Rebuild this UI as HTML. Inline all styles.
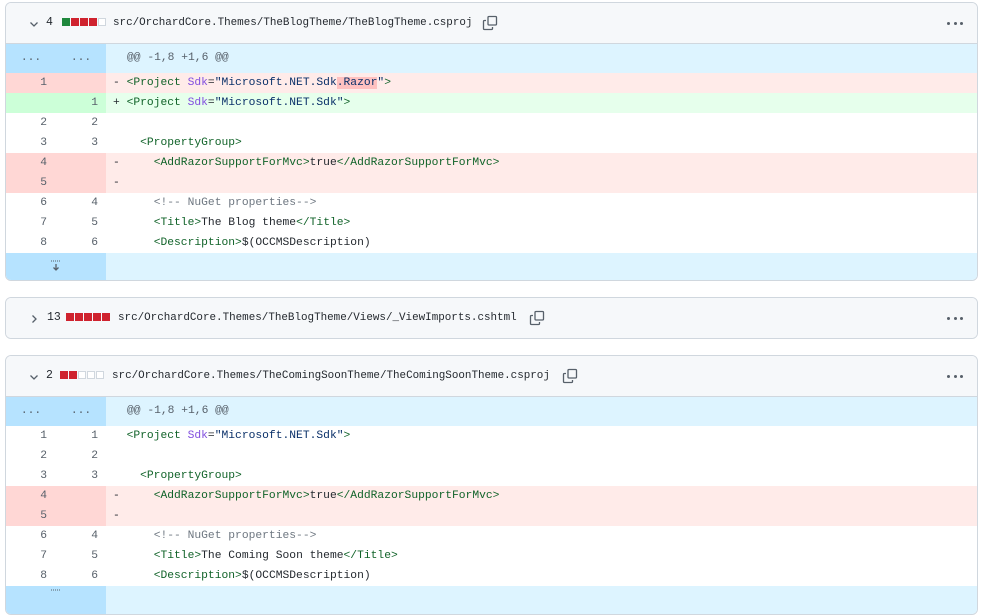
<!DOCTYPE html>
<html><head><meta charset="utf-8"><style>
*{box-sizing:border-box;margin:0;padding:0}
body{width:987px;height:597px;overflow:hidden;background:#fff;font-family:"Liberation Mono",monospace;color:#24292f}
.box{position:absolute;left:5px;width:973px;border:1px solid #d0d7de;border-radius:6px;overflow:hidden;background:#fff}
.hd{height:41px;background:#f6f8fa;border-bottom:1px solid #d0d7de;position:relative;font-size:10.9px;white-space:pre}
.hd.closed{border-bottom:none;height:40px}
.hd>*{position:absolute;top:0;line-height:40px}
.chev{color:#57606a}
.n{color:#24292f;font-size:11.5px}
.sqs{display:flex;gap:1px;top:15px!important;line-height:0!important}
.sq{display:inline-block;width:8px;height:8px}
.g{background:#1f883d}.r{background:#cf222e}.e{background:#fff;border:1px solid #d0d7de}
.dots{left:auto;right:14px;top:19px!important;width:16px;display:flex;justify-content:space-between;line-height:0!important}
.dots i{width:3px;height:3px;background:#57606a;border-radius:50%}
.row{display:flex;height:20px;line-height:20px;font-size:11.3px;white-space:pre}
.ln{width:50px;text-align:right;padding-right:9px;color:#57606a}
.ln.b{padding-right:8px}
.c{flex:1;padding-left:7px}
.hunk{height:29px;line-height:29px;background:#ddf4ff}
.hunk .ln{background:#b6e3ff;color:#57606a;text-align:center;padding:0}
.hunk .c{color:#57606a;padding-left:21px}
.del{background:#ffebe9}.del .ln{background:#ffd7d5}
.add{background:#e6ffec}.add .ln{background:#ccffd8}
.t{color:#116329}.a{color:#8250df}.s{color:#0a3069}.cm{color:#6e7781}
.hl{background:rgba(255,129,130,.4)}
.exp{height:28px;background:#ddf4ff}
.exp .ln2{width:100px;background:#b6e3ff;position:relative}
.copy{top:12px!important;line-height:0!important}
</style></head><body>

<div class="box" style="top:2px;height:279px">
<div class="hd"><svg class="chev" style="left:22px;top:15px" width="12" height="12" viewBox="0 0 12 12"><path d="M2.5 4.5L6 8l3.5-3.5" stroke="#57606a" stroke-width="1.3" fill="none"/></svg><span class="n" style="left:40px">4</span><span class="sqs" style="left:56px"><span class="sq g"></span><span class="sq r"></span><span class="sq r"></span><span class="sq r"></span><span class="sq e"></span></span><span style="left:107px">src/OrchardCore.Themes/TheBlogTheme/TheBlogTheme.csproj</span><svg class="copy" style="left:476px" width="16" height="16" viewBox="0 0 16 16" fill="none" stroke="#57606a" stroke-width="1.3"><rect x="6" y="1.5" width="8.5" height="8.5" rx="1"/><path d="M4 5.5H2.5a1 1 0 0 0-1 1v7a1 1 0 0 0 1 1h7a1 1 0 0 0 1-1V12"/></svg><div class="dots"><i></i><i></i><i></i></div></div>
<div class="row hunk"><span class="ln">...</span><span class="ln">...</span><span class="c">@@ -1,8 +1,6 @@</span></div>
<div class="row del"><span class="ln">1</span><span class="ln b"></span><span class="c">- <span class="t">&lt;Project</span> <span class="a">Sdk</span>=<span class="s">"Microsoft.NET.Sdk<span class="hl">.Razor</span>"</span><span class="t">&gt;</span></span></div>
<div class="row add"><span class="ln"></span><span class="ln b">1</span><span class="c">+ <span class="t">&lt;Project</span> <span class="a">Sdk</span>=<span class="s">"Microsoft.NET.Sdk"</span><span class="t">&gt;</span></span></div>
<div class="row"><span class="ln">2</span><span class="ln b">2</span><span class="c">  </span></div>
<div class="row"><span class="ln">3</span><span class="ln b">3</span><span class="c">    <span class="t">&lt;PropertyGroup&gt;</span></span></div>
<div class="row del"><span class="ln">4</span><span class="ln b"></span><span class="c">-     <span class="t">&lt;AddRazorSupportForMvc&gt;</span>true<span class="t">&lt;/AddRazorSupportForMvc&gt;</span></span></div>
<div class="row del"><span class="ln">5</span><span class="ln b"></span><span class="c">-</span></div>
<div class="row"><span class="ln">6</span><span class="ln b">4</span><span class="c">      <span class="cm">&lt;!-- NuGet properties--&gt;</span></span></div>
<div class="row"><span class="ln">7</span><span class="ln b">5</span><span class="c">      <span class="t">&lt;Title&gt;</span>The Blog theme<span class="t">&lt;/Title&gt;</span></span></div>
<div class="row"><span class="ln">8</span><span class="ln b">6</span><span class="c">      <span class="t">&lt;Description&gt;</span>$(OCCMSDescription)</span></div>
<div class="row exp"><span class="ln2"><svg style="position:absolute;left:44px;top:7px" width="12" height="13" viewBox="0 0 12 13"><path d="M1 1h10" stroke="#57606a" stroke-width="1" stroke-dasharray="1 1"/><path d="M6 4v6M3.5 7.5L6 10l2.5-2.5" stroke="#57606a" stroke-width="1.3" fill="none"/></svg></span></div>
</div>

<div class="box" style="top:297px;height:42px">
<div class="hd closed"><svg style="left:22px;top:15px" width="12" height="12" viewBox="0 0 12 12"><path d="M4.5 2.5L8 6l-3.5 3.5" stroke="#57606a" stroke-width="1.3" fill="none"/></svg><span class="n" style="left:41px">13</span><span class="sqs" style="left:60px"><span class="sq r"></span><span class="sq r"></span><span class="sq r"></span><span class="sq r"></span><span class="sq r"></span></span><span style="left:112px">src/OrchardCore.Themes/TheBlogTheme/Views/_ViewImports.cshtml</span><svg class="copy" style="left:523px" width="16" height="16" viewBox="0 0 16 16" fill="none" stroke="#57606a" stroke-width="1.3"><rect x="6" y="1.5" width="8.5" height="8.5" rx="1"/><path d="M4 5.5H2.5a1 1 0 0 0-1 1v7a1 1 0 0 0 1 1h7a1 1 0 0 0 1-1V12"/></svg><div class="dots"><i></i><i></i><i></i></div></div>
</div>

<div class="box" style="top:355px;height:260px">
<div class="hd"><svg style="left:22px;top:15px" width="12" height="12" viewBox="0 0 12 12"><path d="M2.5 4.5L6 8l3.5-3.5" stroke="#57606a" stroke-width="1.3" fill="none"/></svg><span class="n" style="left:40px">2</span><span class="sqs" style="left:54px"><span class="sq r"></span><span class="sq r"></span><span class="sq e"></span><span class="sq e"></span><span class="sq e"></span></span><span style="left:106px">src/OrchardCore.Themes/TheComingSoonTheme/TheComingSoonTheme.csproj</span><svg class="copy" style="left:556px" width="16" height="16" viewBox="0 0 16 16" fill="none" stroke="#57606a" stroke-width="1.3"><rect x="6" y="1.5" width="8.5" height="8.5" rx="1"/><path d="M4 5.5H2.5a1 1 0 0 0-1 1v7a1 1 0 0 0 1 1h7a1 1 0 0 0 1-1V12"/></svg><div class="dots"><i></i><i></i><i></i></div></div>
<div class="row hunk"><span class="ln">...</span><span class="ln">...</span><span class="c">@@ -1,8 +1,6 @@</span></div>
<div class="row"><span class="ln">1</span><span class="ln b">1</span><span class="c">  <span class="t">&lt;Project</span> <span class="a">Sdk</span>=<span class="s">"Microsoft.NET.Sdk"</span><span class="t">&gt;</span></span></div>
<div class="row"><span class="ln">2</span><span class="ln b">2</span><span class="c">  </span></div>
<div class="row"><span class="ln">3</span><span class="ln b">3</span><span class="c">    <span class="t">&lt;PropertyGroup&gt;</span></span></div>
<div class="row del"><span class="ln">4</span><span class="ln b"></span><span class="c">-     <span class="t">&lt;AddRazorSupportForMvc&gt;</span>true<span class="t">&lt;/AddRazorSupportForMvc&gt;</span></span></div>
<div class="row del"><span class="ln">5</span><span class="ln b"></span><span class="c">-</span></div>
<div class="row"><span class="ln">6</span><span class="ln b">4</span><span class="c">      <span class="cm">&lt;!-- NuGet properties--&gt;</span></span></div>
<div class="row"><span class="ln">7</span><span class="ln b">5</span><span class="c">      <span class="t">&lt;Title&gt;</span>The Coming Soon theme<span class="t">&lt;/Title&gt;</span></span></div>
<div class="row"><span class="ln">8</span><span class="ln b">6</span><span class="c">      <span class="t">&lt;Description&gt;</span>$(OCCMSDescription)</span></div>
<div class="row exp"><span class="ln2"><svg style="position:absolute;left:44px;top:3px" width="12" height="13" viewBox="0 0 12 13"><path d="M1 1h10" stroke="#57606a" stroke-width="1" stroke-dasharray="1 1"/></svg></span></div>
</div>
</body></html>
